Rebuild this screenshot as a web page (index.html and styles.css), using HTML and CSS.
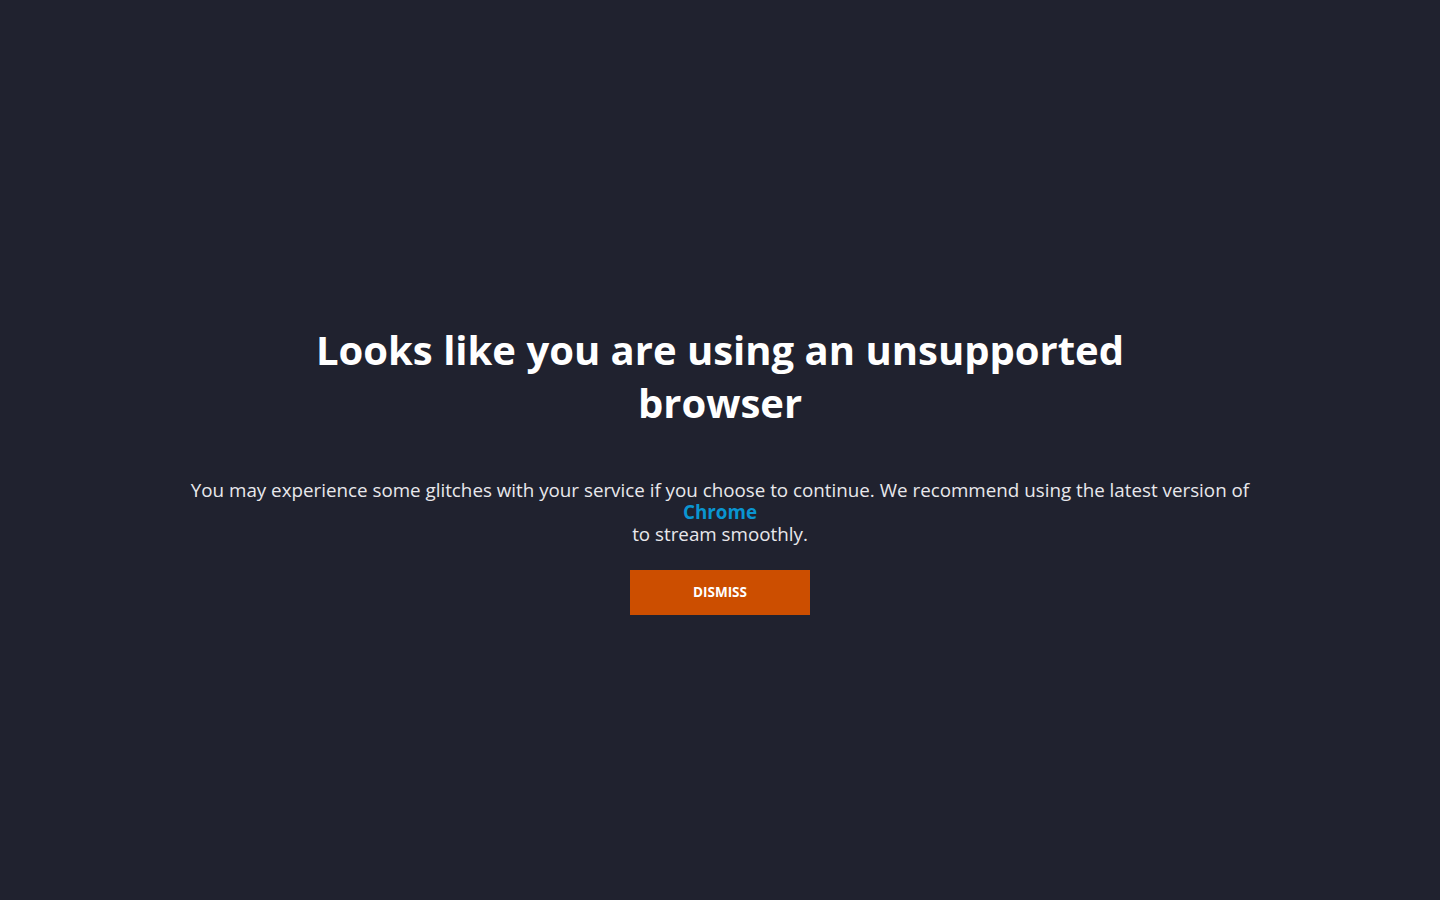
FILE: index.html
```html
<!DOCTYPE html>
<html lang="en">
<head>
<meta charset="utf-8">
<title>Unsupported browser</title>
<link rel="stylesheet" href="styles.css">
</head>
<body>
<main class="screen">
  <section class="notice">
    <h1 class="title">Looks like you are using an unsupported browser</h1>
    <p class="message">You may experience some glitches with your service if you choose to continue. We recommend using the latest version of <a class="link" href="#">Chrome</a> to stream smoothly.</p>
    <button class="dismiss" type="button">DISMISS</button>
  </section>
</main>
</body>
</html>
```
FILE: styles.css
```css
html, body {
  margin: 0;
  padding: 0;
  height: 100%;
}
body {
  background: #20222f;
  color: #ffffff;
  font-family: "Open Sans", "Lato", sans-serif;
}
.screen {
  height: 900px;
  display: flex;
  justify-content: center;
  box-sizing: border-box;
  padding-top: 323px;
}
.notice {
  display: flex;
  flex-direction: column;
  align-items: center;
  text-align: center;
  width: 1100px;
}
.title {
  margin: 0;
  width: 860px;
  font-size: 40px;
  line-height: 53px;
  font-weight: 700;
}
.message {
  margin: 50px 0 0;
  font-size: 18.8px;
  line-height: 22px;
  color: #e8e8ec;
}
.link {
  display: block;
  color: #0a95d1;
  font-weight: 700;
  text-decoration: none;
}
.dismiss {
  margin-top: 25px;
  width: 180px;
  height: 45px;
  padding: 0 0 2px;
  border: 0;
  background: #cc4e00;
  color: #ffffff;
  font-family: inherit;
  font-size: 13.5px;
  font-weight: 700;
}
```
